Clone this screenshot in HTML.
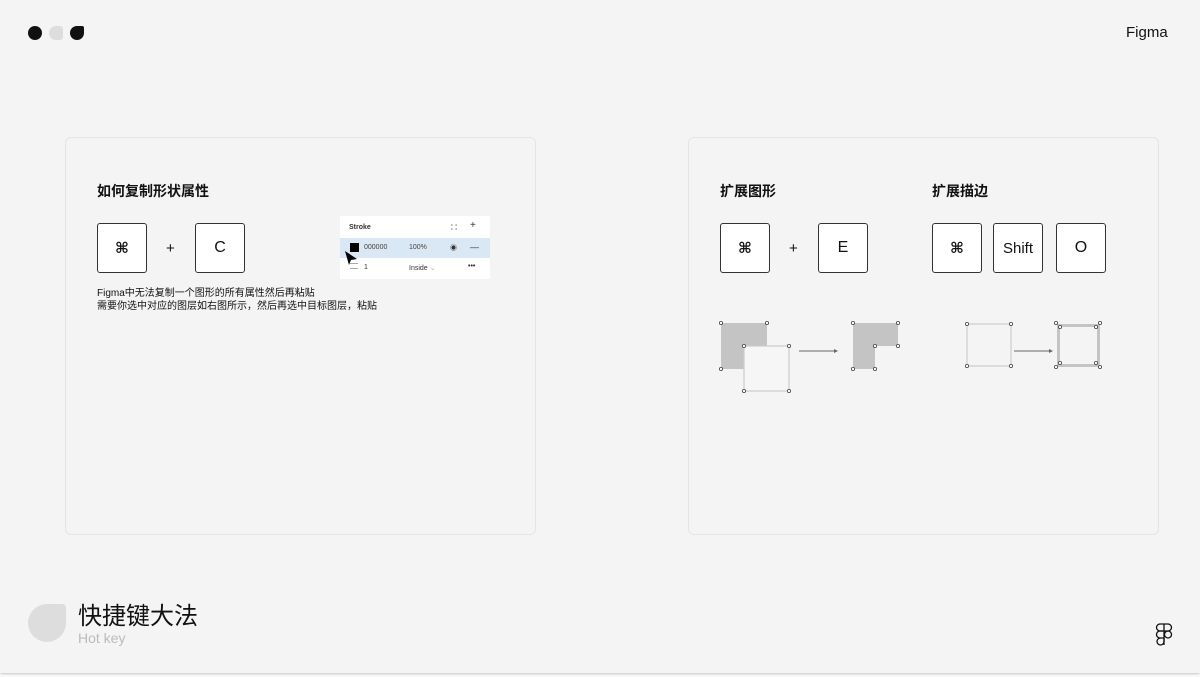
<!DOCTYPE html>
<html><head><meta charset="utf-8"><style>
*{margin:0;padding:0;box-sizing:border-box}
body{width:1200px;height:677px;background:#fff;font-family:"Liberation Sans","Noto Sans CJK SC",sans-serif;position:relative;overflow:hidden;color:#111}
.frame{position:absolute;left:0;top:0;width:1200px;height:673px;background:#f4f4f4;box-shadow:0 1px 3px rgba(0,0,0,.25)}
.card{position:absolute;top:137px;height:398px;width:471px;border:1px solid #e4e4e4;border-radius:6px;background:#f4f4f4}
.t{position:absolute;font-size:14px;font-weight:bold;color:#111}
.key{position:absolute;width:50px;height:50px;border:1px solid #333;border-radius:3px;background:#fff;display:flex;align-items:center;justify-content:center;font-size:16px}
.cmd{font-family:"DejaVu Sans",sans-serif;font-weight:bold;font-size:15px}
.plus{position:absolute;font-size:15px}
.ab{position:absolute}
</style></head><body>
<div class="frame"></div>
<div class="ab" style="left:28px;top:26px;width:14px;height:14px;border-radius:50%;background:#111"></div>
<div class="ab" style="left:49px;top:26px;width:14px;height:14px;border-radius:7px 3px 3px 7px;background:#ddd"></div>
<div class="ab" style="left:70px;top:26px;width:14px;height:14px;border-radius:7px 2px 7px 7px;background:#111"></div>
<div class="ab" style="left:1126px;top:24px;font-size:15px">Figma</div>

<div class="card" style="left:65px"></div>
<div class="card" style="left:688px"></div>

<div class="t" style="left:97px;top:181px">如何复制形状属性</div>
<div class="key cmd" style="left:97px;top:223px">⌘</div>
<div class="plus" style="left:166px;top:240px">+</div>
<div class="key" style="left:195px;top:223px">C</div>
<div class="ab" style="left:97px;top:287px;font-size:10px;line-height:13px">Figma中无法复制一个图形的所有属性然后再粘贴<br>需要你选中对应的图层如右图所示，然后再选中目标图层，粘贴</div>

<div class="ab" style="left:340px;top:216px;width:150px;height:63px;background:#fff;font-size:7px;color:#333">
<div class="ab" style="left:9px;top:8px;font-weight:bold">Stroke</div>
<div class="ab" style="left:110px;top:6px;font-size:8px">∷</div>
<div class="ab" style="left:130px;top:4px;font-size:10px">+</div>
<div class="ab" style="left:0;top:22px;width:150px;height:20px;background:#dae7f4"></div>
<div class="ab" style="left:10px;top:27px;width:9px;height:9px;background:#000"></div>
<div class="ab" style="left:24px;top:28px;color:#444">000000</div>
<div class="ab" style="left:69px;top:28px;color:#444">100%</div>
<div class="ab" style="left:110px;top:27px">◉</div>
<div class="ab" style="left:130px;top:26px;font-size:9px">—</div>
<div class="ab" style="left:10px;top:47px;width:8px;height:6px;border-top:1px solid #aaa;border-bottom:1px solid #aaa"></div>
<div class="ab" style="left:24px;top:48px">1</div>
<div class="ab" style="left:69px;top:48px">Inside <span style="color:#aaa">⌄</span></div>
<div class="ab" style="left:128px;top:47px;font-weight:bold">•••</div>
<svg class="ab" style="left:3px;top:34px" width="16" height="16"><path d="M2 1 L14 9 L8 10 L6 15 Z" fill="#000"/></svg>
</div>

<div class="t" style="left:720px;top:181px">扩展图形</div>
<div class="t" style="left:932px;top:181px">扩展描边</div>
<div class="key cmd" style="left:720px;top:223px">⌘</div>
<div class="plus" style="left:789px;top:240px">+</div>
<div class="key" style="left:818px;top:223px">E</div>
<div class="key cmd" style="left:932px;top:223px">⌘</div>
<div class="key" style="left:993px;top:223px;font-size:15px">Shift</div>
<div class="key" style="left:1056px;top:223px">O</div>

<svg class="ab" style="left:0;top:0" width="1200" height="677">
<g fill="#fff" stroke="#444" stroke-width="0.8">
<rect x="721" y="323" width="46" height="46" fill="#c4c4c4" stroke="none"/>
<rect x="744" y="346" width="45" height="45" fill="#f6f6f6" stroke="#ccc" stroke-width="1.2"/>
<path d="M853 323 H898 V346 H875 V369 H853 Z" fill="#c4c4c4" stroke="none"/>
<line x1="799" y1="351" x2="836" y2="351" stroke="#666" stroke-width="1"/>
<path d="M834 349 L838 351 L834 353 Z" fill="#666" stroke="none"/>
<rect x="967" y="324" width="44" height="42" fill="none" stroke="#ccc" stroke-width="1.2"/>
<line x1="1014" y1="351" x2="1051" y2="351" stroke="#666" stroke-width="1"/>
<path d="M1049 349 L1053 351 L1049 353 Z" fill="#666" stroke="none"/>
<rect x="1058.5" y="325.5" width="40" height="40" fill="none" stroke="#c4c4c4" stroke-width="3"/>
<circle cx="721" cy="323" r="1.6"/><circle cx="767" cy="323" r="1.6"/><circle cx="721" cy="369" r="1.6"/>
<circle cx="744" cy="346" r="1.6"/><circle cx="789" cy="346" r="1.6"/><circle cx="744" cy="391" r="1.6"/><circle cx="789" cy="391" r="1.6"/>
<circle cx="853" cy="323" r="1.6"/><circle cx="898" cy="323" r="1.6"/><circle cx="875" cy="346" r="1.6"/><circle cx="898" cy="346" r="1.6"/><circle cx="853" cy="369" r="1.6"/><circle cx="875" cy="369" r="1.6"/>
<circle cx="967" cy="324" r="1.6"/><circle cx="1011" cy="324" r="1.6"/><circle cx="967" cy="366" r="1.6"/><circle cx="1011" cy="366" r="1.6"/>
<circle cx="1056" cy="323" r="1.6"/><circle cx="1100" cy="323" r="1.6"/><circle cx="1056" cy="367" r="1.6"/><circle cx="1100" cy="367" r="1.6"/>
<circle cx="1060" cy="327" r="1.6"/><circle cx="1096" cy="327" r="1.6"/><circle cx="1060" cy="363" r="1.6"/><circle cx="1096" cy="363" r="1.6"/>
</g>
<g fill="none" stroke="#111" stroke-width="1.3">
<path d="M1160 624 H1168 A3.5 3.5 0 0 1 1168 631 H1160 A3.5 3.5 0 0 1 1160 624 Z"/>
<path d="M1164 624 V645"/>
<circle cx="1168" cy="634.5" r="3.5"/>
<path d="M1164 631 H1160 A3.5 3.5 0 0 0 1160 638 H1164"/>
<path d="M1164 638 V641.5 A3.5 3.5 0 1 1 1160.5 638"/>
</g>
</svg>

<div class="ab" style="left:28px;top:604px;width:38px;height:38px;border-radius:19px 4px 19px 19px;background:#ddd"></div>
<div class="ab" style="left:78px;top:602px;font-size:24px;line-height:30px;color:#111">快捷键大法</div>
<div class="ab" style="left:78px;top:630px;font-size:14px;color:#bbb">Hot key</div>
</body></html>
